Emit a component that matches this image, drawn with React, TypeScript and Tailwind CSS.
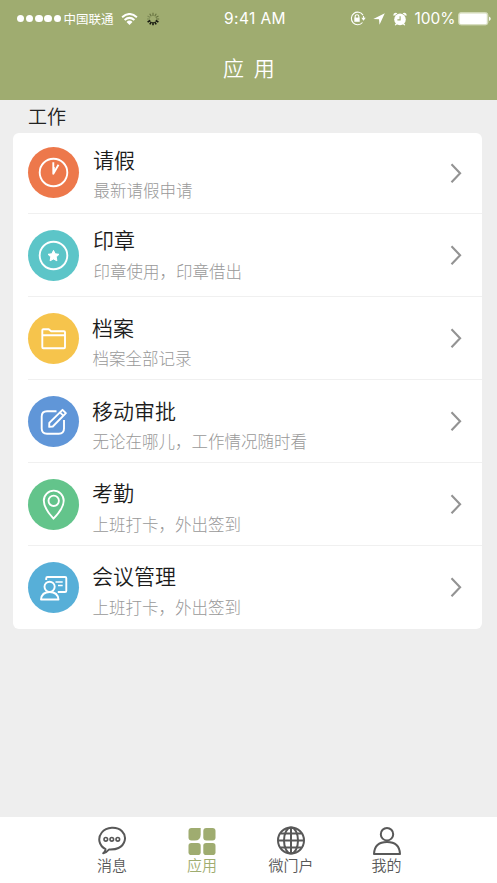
import type { ReactNode } from "react";

const clock = (
  <>
    <circle cx="25.5" cy="25.5" r="13.8" />
    <path d="M25.3 15.3V26.8L30.5 17.7" />
    <path d="M26.1 20V25" strokeWidth="1.3" />
  </>
);

const stamp = (
  <>
    <circle cx="25.5" cy="25.5" r="13.8" />
    <path
      d="M25.5 20.4l1.7 3.4 3.8.5-2.8 2.7.7 3.8-3.4-1.8-3.4 1.8.7-3.8-2.8-2.7 3.8-.5z"
      fill="white"
      strokeWidth="1"
    />
  </>
);

const folder = (
  <>
    <path d="M14.3 34.2V17.2Q14.3 16.2 15.3 16.2H20.7L23.2 18.3H36Q37 18.3 37 19.3V34.2Q37 35.2 36 35.2H15.3Q14.3 35.2 14.3 34.2Z" />
    <path d="M14.3 22.3H37" />
  </>
);

const edit = (
  <>
    <path d="M28.5 15.3H19Q13.7 15.3 13.7 20.5V32.5Q13.7 37.7 19 37.7H30.8Q36 37.7 36 32.5V24" />
    <path d="M21.2 30.8L21.3 26.9L34.5 13.8L37.9 17.2L24.8 30.5Z" />
    <path d="M32 16.3L35.3 19.6" />
  </>
);

const pin = (
  <>
    <path d="M25.5 39.7C22.8 36.8 15.8 28.4 15.8 21.7A9.7 9.8 0 0 1 35.7 21.7C35.7 28.4 28.3 36.8 25.5 39.7Z" />
    <circle cx="25.7" cy="21.8" r="5.2" />
  </>
);

const meeting = (
  <>
    <circle cx="21.6" cy="24.8" r="5.1" />
    <path d="M13 37.5Q13.7 30 21.7 30Q29.7 30 30.5 37.5Z" />
    <path d="M18.2 18V16.3Q18.2 15 19.5 15H37Q38.3 15 38.3 16.3V28.7Q38.3 30 37 30H29.8" />
    <path d="M27.5 20H34.7M30 23.5H34.7" strokeWidth="1.5" />
  </>
);

type Item = {
  title: string;
  note: string;
  icon: ReactNode;
  tone: string;
  row: string;
  disc: string;
  text: string;
  gap: string;
  arrow: string;
};

const items: Item[] = [
  { title: "请假", note: "最新请假申请", icon: clock, tone: "bg-[#ed784b]", row: "h-[81px]", disc: "mt-[13.5px]", text: "pt-[14px] pl-[14px]", gap: "gap-[9px]", arrow: "mt-[30px]" },
  { title: "印章", note: "印章使用，印章借出", icon: stamp, tone: "bg-[#5cc5c8]", row: "h-[83px]", disc: "mt-4", text: "pt-[13px] pl-[14px]", gap: "gap-[10px]", arrow: "mt-[31px]" },
  { title: "档案", note: "档案全部记录", icon: folder, tone: "bg-[#f6c44c]", row: "h-[83px]", disc: "mt-4", text: "pt-[18px] pl-[13px]", gap: "gap-[9px]", arrow: "mt-[31px]" },
  { title: "移动审批", note: "无论在哪儿，工作情况随时看", icon: edit, tone: "bg-[#6096d8]", row: "h-[83px]", disc: "mt-4", text: "pt-[18px] pl-[13px]", gap: "gap-[9px]", arrow: "mt-[31px]" },
  { title: "考勤", note: "上班打卡，外出签到", icon: pin, tone: "bg-[#63c48b]", row: "h-[83px]", disc: "mt-4", text: "pt-[17px] pl-[13px]", gap: "gap-[10px]", arrow: "mt-[31px]" },
  { title: "会议管理", note: "上班打卡，外出签到", icon: meeting, tone: "bg-[#57afd8]", row: "h-[83px]", disc: "mt-4", text: "pt-[17px] pl-[13px]", gap: "gap-[10px]", arrow: "mt-[31px]" },
];

function StatusBar() {
  return (
    <div className="flex h-9 items-center pt-[1px] pl-[16.5px] text-white">
      <div className="flex w-[47px] gap-[1.8px]">
        {[0, 1, 2, 3, 4].map((n) => (
          <span key={n} className="size-[7.5px] rounded-full bg-white" />
        ))}
      </div>
      <span className="w-[57px] text-[12.5px] leading-4">中国联通</span>
      <svg className="h-3 w-[17px]" viewBox="0 0 16 12" fill="none" stroke="white" strokeWidth="2">
        <path d="M.6 4.2Q8-2.2 15.4 4.2M3.1 7Q8 2.7 12.9 7" />
        <path d="M5 9Q8 6.2 11 9L8 12Z" fill="white" stroke="none" />
      </svg>
      <svg className="ml-[8px] size-[14px]" viewBox="0 0 14 14" strokeWidth="1.1">
        <path stroke="#65713f" d="M7 4V.8M8.7 4.3L10.3 1.7M9.7 5.6L12.5 4M10 7H13.2M5.3 4.3L3.7 1.7" />
        <path stroke="#7d8957" d="M4.3 5.5L1.5 4M4 7H1" />
        <path stroke="#151810" strokeWidth="1.6" d="M9.7 8.5L12.4 10M8.6 9.8L10.2 12.4M7 10V13.2M5.4 9.8L3.8 12.4M4.3 8.5L1.6 10" />
      </svg>
      <span className="ml-[64.5px] w-[126px] font-[Inter] text-[15.5px] leading-5 tracking-[.4px]">9:41 AM</span>
      <svg className="h-[15px] w-4" viewBox="0 0 16 15" fill="none" stroke="white" strokeWidth="1.1">
        <path d="M13 4.1A6.3 6.3 0 1 0 12.5 11.5M13.3 5Q13.8 6.3 13.7 7.3" />
        <path d="M11.3 6.8H15.7L13.5 9.8Z" fill="white" stroke="none" />
        <path d="M5.2 7V5.3Q5.2 3.8 7 3.8T8.8 5.3V7" />
        <path d="M4.3 6.6H9.7V10.8H4.3Z" fill="white" stroke="none" />
      </svg>
      <svg className="ml-[7px] size-3" viewBox="0 0 12 12" fill="white">
        <path d="M.3 6.1L11.8.2L6.5 11.8L6 6.2Z" />
      </svg>
      <svg className="ml-2 h-[14px] w-[14px]" viewBox="0 0 14 14" fill="white">
        <circle cx="7" cy="7.4" r="5.8" />
        <path d="M.7 4.1Q-.2 2 1.7 1.1Q3.3.3 4.4 1.5ZM13.3 4.1Q14.2 2 12.3 1.1Q10.7.3 9.6 1.5ZM3.2 11L1.7 13L2.5 13.5L4.4 12ZM10.8 11L12.3 13L11.5 13.5L9.6 12Z" />
        <path d="M7.1 4.3V7.9H4.4" fill="none" stroke="#9fac70" strokeWidth="1.1" />
      </svg>
      <span className="ml-[7.5px] w-[43.5px] font-[Inter] text-[15.5px] leading-5">100%</span>
      <svg className="h-[14px] w-[33px]" viewBox="0 0 33 14" fill="white">
        <rect x=".6" y=".6" width="29.3" height="12.3" rx="2.4" fill="#e0e5ce" stroke="#d3dab9" />
        <rect x="1.7" y="1.7" width="27" height="10.2" rx="1.2" />
        <path d="M31.1 4.5Q32.7 5.3 32.7 6.8T31.1 9.1Z" />
      </svg>
    </div>
  );
}

function Row({ item, last }: { item: Item; last: boolean }) {
  return (
    <li className={`flex ${item.row} ${last ? "" : "border-b border-[#f0f0f0]"}`}>
      <svg
        className={`size-[51px] shrink-0 rounded-full ${item.tone} ${item.disc}`}
        viewBox="0 0 51 51"
        fill="none"
        stroke="white"
        strokeWidth="1.9"
        strokeLinejoin="round"
      >
        {item.icon}
      </svg>
      <div className={`flex grow flex-col ${item.text} ${item.gap}`}>
        <h2 className="text-[21px] leading-6 font-[350] text-[#1c1c1c]">{item.title}</h2>
        <p className="pl-[.6px] text-[16.5px] leading-5 font-light whitespace-nowrap text-[#999999]">{item.note}</p>
      </div>
      <svg
        className={`mr-5 h-5 w-3 shrink-0 ${item.arrow}`}
        viewBox="0 0 12 20"
        fill="none"
        stroke="#939393"
        strokeWidth="2.1"
      >
        <path d="M1.5 1.3L10.1 10.3L1.5 19.3" />
      </svg>
    </li>
  );
}

function Tab({ label, className, children }: { label: string; className: string; children: ReactNode }) {
  return (
    <button className={`flex flex-col items-center ${className}`}>
      <svg className="size-[30px]" viewBox="0 0 30 30" fill="none" stroke="currentColor" strokeWidth="2" strokeLinejoin="round">
        {children}
      </svg>
      <span className="text-[15px] leading-5 font-[350] whitespace-nowrap">{label}</span>
    </button>
  );
}

export default function App() {
  return (
    <div className="flex h-[883px] w-[497px] flex-col overflow-hidden bg-[#eeeeee] font-['Noto_Sans_CJK_SC',sans-serif]">
      <header className="h-[100px] shrink-0 bg-[#9fac70]">
        <StatusBar />
        <h1 className="mt-[17px] pl-[223px] text-[21px] leading-7 font-[350] text-white [word-spacing:5px]">应 用</h1>
      </header>
      <main className="grow">
        <h2 className="h-[33px] pl-7 text-[19px] leading-[31px] font-[350] text-[#222222]">工作</h2>
        <ul className="mr-[15px] ml-[13px] rounded-md bg-white pl-[15px]">
          {items.map((item, i) => (
            <Row key={item.title} item={item} last={i === items.length - 1} />
          ))}
        </ul>
      </main>
      <nav className="flex h-[66px] shrink-0 bg-white pt-[8px] pl-[89px] text-[#585858]">
        <Tab label="消息" className="w-[46px]">
          <path d="M8.5 24.2C1.8 20.5.4 13 4.8 7.5C9.5 1.7 20 1.3 25 6.3C30.4 11.7 28 20 21.5 23C18 24.8 15 24.5 12 24.5C10.8 26 8.2 27.9 6.2 28.3C8.1 27 8.5 25.8 8.5 24.2Z" />
          <g strokeWidth="1.6">
            <circle cx="8.8" cy="14.3" r="1.8" />
            <circle cx="14.8" cy="14.3" r="1.8" />
            <circle cx="20.8" cy="14.3" r="1.8" />
          </g>
        </Tab>
        <Tab label="应用" className="ml-[44px] w-[46px] text-[#9fac70]">
          <g fill="currentColor" stroke="none">
            <path d="M1.5 6Q1.5 3 4.5 3H13.7V9.5Q13.7 15.5 7.8 15.5H4.5Q1.5 15.5 1.5 12.5Z" />
            <path d="M19.3 3H25.5Q28.5 3 28.5 6V12.5Q28.5 15.5 25.5 15.5H19.3Q16.3 15.5 16.3 12.5V6Q16.3 3 19.3 3Z" />
            <rect x="1.5" y="18" width="12.2" height="12" rx="2.8" />
            <rect x="16.3" y="18" width="12.2" height="12" rx="2.8" />
          </g>
        </Tab>
        <Tab label="微门户" className="ml-[43px] w-[46px]">
          <circle cx="15" cy="15.5" r="13" />
          <ellipse cx="15" cy="15.5" rx="7" ry="13" />
          <path d="M15 2.5V28.5M2 15.5H28M4.5 8.5H25.5M4.5 22.5H25.5" />
        </Tab>
        <Tab label="我的" className="ml-[49.5px] w-[46px]">
          <circle cx="15" cy="9.2" r="6.2" />
          <path d="M2 29Q2.5 17 15 17Q27.5 17 28 29Z" />
        </Tab>
      </nav>
    </div>
  );
}
